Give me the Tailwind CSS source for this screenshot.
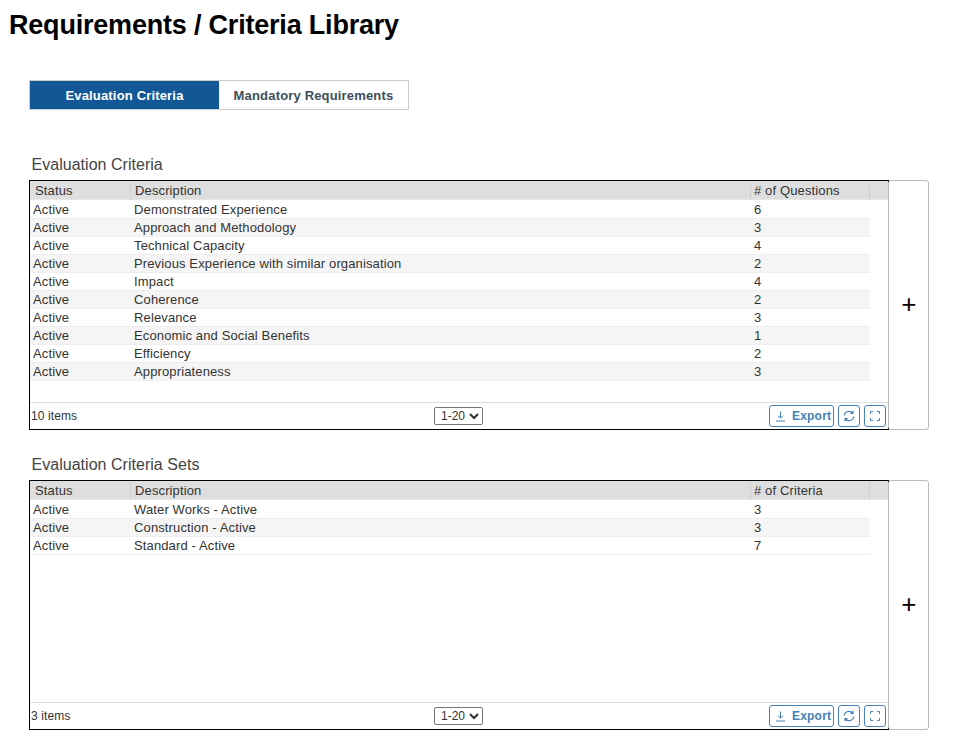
<!DOCTYPE html>
<html lang="en">
<head>
  <meta charset="UTF-8" />
  <title>Requirements / Criteria Library</title>
  <script src="https://cdn.jsdelivr.net/npm/@tailwindcss/browser@4"></script>
</head>
<body class="bg-white text-[#333] font-['Liberation_Sans',Arial,sans-serif] text-[13px] tracking-[0.13px] overflow-hidden">
  <div class="h-[754px] w-[956px]">
    <h1 class="pl-[9px] pt-[10px] h-[80px] text-[27px] leading-[31px] font-bold text-black tracking-[-0.2px]">Requirements / Criteria Library</h1>

    <!-- tabs -->
    <div class="ml-[29px] flex w-[380px] h-[30px] border border-[#ccc] text-[13px] font-bold tracking-[0.17px]">
      <div class="w-[189px] bg-[#125896] text-white flex items-center justify-center pt-[2px]">Evaluation Criteria</div>
      <div class="flex-1 text-[#3d4f58] flex items-center justify-center pt-[2px]">Mandatory Requirements</div>
    </div>

    <!-- criteria -->
    <h2 class="ml-[31px] mt-[45px] h-[25px] pt-px pl-[0.5px] text-[16px] leading-[18px] font-normal text-[#444] tracking-[0.03px]">Evaluation Criteria</h2>
    <div class="ml-[29px] flex h-[250px]">
      <div class="w-[860px] border border-black flex flex-col">
        <div class="flex h-[19px] items-center bg-[#dedede] border-b border-[#e6e6e6] leading-[18px] pr-[18px] pt-px">
          <div class="w-[101px] pl-[5px] border-r border-[#d0d0d0]">Status</div>
          <div class="w-[620px] pl-[4px] border-r border-[#d0d0d0]">Description</div>
          <div class="flex-1 pl-[3px] border-r border-[#d0d0d0]"># of Questions</div>
        </div>
        <div class="flex-1 pr-[18px] pt-px">
          <div class="flex h-[18px] leading-[18px] border-b border-[#eee]"><div class="w-[100px] pl-[3px]">Active</div><div class="w-[620px] pl-[4px]">Demonstrated Experience</div><div class="pl-[4px]">6</div></div>
          <div class="flex h-[18px] leading-[18px] border-b border-[#eee] bg-[#f5f5f5]"><div class="w-[100px] pl-[3px]">Active</div><div class="w-[620px] pl-[4px]">Approach and Methodology</div><div class="pl-[4px]">3</div></div>
          <div class="flex h-[18px] leading-[18px] border-b border-[#eee]"><div class="w-[100px] pl-[3px]">Active</div><div class="w-[620px] pl-[4px]">Technical Capacity</div><div class="pl-[4px]">4</div></div>
          <div class="flex h-[18px] leading-[18px] border-b border-[#eee] bg-[#f5f5f5]"><div class="w-[100px] pl-[3px]">Active</div><div class="w-[620px] pl-[4px]">Previous Experience with similar organisation</div><div class="pl-[4px]">2</div></div>
          <div class="flex h-[18px] leading-[18px] border-b border-[#eee]"><div class="w-[100px] pl-[3px]">Active</div><div class="w-[620px] pl-[4px]">Impact</div><div class="pl-[4px]">4</div></div>
          <div class="flex h-[18px] leading-[18px] border-b border-[#eee] bg-[#f5f5f5]"><div class="w-[100px] pl-[3px]">Active</div><div class="w-[620px] pl-[4px]">Coherence</div><div class="pl-[4px]">2</div></div>
          <div class="flex h-[18px] leading-[18px] border-b border-[#eee]"><div class="w-[100px] pl-[3px]">Active</div><div class="w-[620px] pl-[4px]">Relevance</div><div class="pl-[4px]">3</div></div>
          <div class="flex h-[18px] leading-[18px] border-b border-[#eee] bg-[#f5f5f5]"><div class="w-[100px] pl-[3px]">Active</div><div class="w-[620px] pl-[4px]">Economic and Social Benefits</div><div class="pl-[4px]">1</div></div>
          <div class="flex h-[18px] leading-[18px] border-b border-[#eee]"><div class="w-[100px] pl-[3px]">Active</div><div class="w-[620px] pl-[4px]">Efficiency</div><div class="pl-[4px]">2</div></div>
          <div class="flex h-[18px] leading-[18px] border-b border-[#eee] bg-[#f5f5f5]"><div class="w-[100px] pl-[3px]">Active</div><div class="w-[620px] pl-[4px]">Appropriateness</div><div class="pl-[4px]">3</div></div>
        </div>
        <div class="h-[27px] border-t border-[#ddd] flex items-center pl-[1px] pr-[2px] text-[12px] tracking-[0.1px]">
          <div class="w-[403px]">10 items</div>
          <div class="flex-1 flex">
            <select class="w-[49px] h-[18px] border border-[#767676] rounded-[2px] text-[12px] pl-[2px] bg-white tracking-normal appearance-auto"><option>1-20</option></select>
          </div>
          <div class="flex gap-[4px]">
            <div class="w-[65px] h-[22px] rounded-[3px] border border-[#4682b4] text-[#4682b4] font-bold tracking-[0.2px] flex items-center pl-[5px] gap-[6px]">
              <svg width="11" height="11" viewBox="0 0 11 11" fill="none" stroke="#4682b4" stroke-width="1"><path d="M5.5 0.5V7M3 4.7L5.5 7.2L8 4.7M1 10H10"/></svg>
              <span>Export</span>
            </div>
            <div class="w-[22px] h-[22px] rounded-[3px] border border-[#4682b4] flex items-center justify-center">
              <svg width="12" height="12" viewBox="0 0 12 12" fill="none" stroke="#4682b4" stroke-width="1.2"><path d="M1.2 5.5A4.8 4.8 0 0 1 9.6 3M10.8 6.5A4.8 4.8 0 0 1 2.4 9M10 0.8V3.4H7.4M2 11.2V8.6H4.6"/></svg>
            </div>
            <div class="w-[22px] h-[22px] rounded-[3px] border border-[#4682b4] flex items-center justify-center">
              <svg width="10" height="10" viewBox="0 0 10 10" fill="none" stroke="#4682b4" stroke-width="1"><path d="M0.5 3V0.5H3M7 0.5H9.5V3M9.5 7V9.5H7M3 9.5H0.5V7"/></svg>
            </div>
          </div>
        </div>
      </div>
      <div class="w-[41px] -ml-px border border-[#bbb] rounded-[3px] flex items-center justify-center text-[26px] leading-[26px] text-black pl-px pb-[2px]">+</div>
    </div>

    <!-- sets -->
    <h2 class="ml-[31px] mt-[25px] h-[25px] pt-px pl-[0.5px] text-[16px] leading-[18px] font-normal text-[#444] tracking-[0.03px]">Evaluation Criteria Sets</h2>
    <div class="ml-[29px] flex h-[250px]">
      <div class="w-[860px] border border-black flex flex-col">
        <div class="flex h-[19px] items-center bg-[#dedede] border-b border-[#e6e6e6] leading-[18px] pr-[18px] pt-px">
          <div class="w-[101px] pl-[5px] border-r border-[#d0d0d0]">Status</div>
          <div class="w-[620px] pl-[4px] border-r border-[#d0d0d0]">Description</div>
          <div class="flex-1 pl-[3px] border-r border-[#d0d0d0]"># of Criteria</div>
        </div>
        <div class="flex-1 pr-[18px] pt-px">
          <div class="flex h-[18px] leading-[18px] border-b border-[#eee]"><div class="w-[100px] pl-[3px]">Active</div><div class="w-[620px] pl-[4px]">Water Works - Active</div><div class="pl-[4px]">3</div></div>
          <div class="flex h-[18px] leading-[18px] border-b border-[#eee] bg-[#f5f5f5]"><div class="w-[100px] pl-[3px]">Active</div><div class="w-[620px] pl-[4px]">Construction - Active</div><div class="pl-[4px]">3</div></div>
          <div class="flex h-[18px] leading-[18px] border-b border-[#eee]"><div class="w-[100px] pl-[3px]">Active</div><div class="w-[620px] pl-[4px]">Standard - Active</div><div class="pl-[4px]">7</div></div>
        </div>
        <div class="h-[27px] border-t border-[#ddd] flex items-center pl-[1px] pr-[2px] text-[12px] tracking-[0.1px]">
          <div class="w-[403px]">3 items</div>
          <div class="flex-1 flex">
            <select class="w-[49px] h-[18px] border border-[#767676] rounded-[2px] text-[12px] pl-[2px] bg-white tracking-normal appearance-auto"><option>1-20</option></select>
          </div>
          <div class="flex gap-[4px]">
            <div class="w-[65px] h-[22px] rounded-[3px] border border-[#4682b4] text-[#4682b4] font-bold tracking-[0.2px] flex items-center pl-[5px] gap-[6px]">
              <svg width="11" height="11" viewBox="0 0 11 11" fill="none" stroke="#4682b4" stroke-width="1"><path d="M5.5 0.5V7M3 4.7L5.5 7.2L8 4.7M1 10H10"/></svg>
              <span>Export</span>
            </div>
            <div class="w-[22px] h-[22px] rounded-[3px] border border-[#4682b4] flex items-center justify-center">
              <svg width="12" height="12" viewBox="0 0 12 12" fill="none" stroke="#4682b4" stroke-width="1.2"><path d="M1.2 5.5A4.8 4.8 0 0 1 9.6 3M10.8 6.5A4.8 4.8 0 0 1 2.4 9M10 0.8V3.4H7.4M2 11.2V8.6H4.6"/></svg>
            </div>
            <div class="w-[22px] h-[22px] rounded-[3px] border border-[#4682b4] flex items-center justify-center">
              <svg width="10" height="10" viewBox="0 0 10 10" fill="none" stroke="#4682b4" stroke-width="1"><path d="M0.5 3V0.5H3M7 0.5H9.5V3M9.5 7V9.5H7M3 9.5H0.5V7"/></svg>
            </div>
          </div>
        </div>
      </div>
      <div class="w-[41px] -ml-px border border-[#bbb] rounded-[3px] flex items-center justify-center text-[26px] leading-[26px] text-black pl-px pb-[2px]">+</div>
    </div>
  </div>
</body>
</html>
